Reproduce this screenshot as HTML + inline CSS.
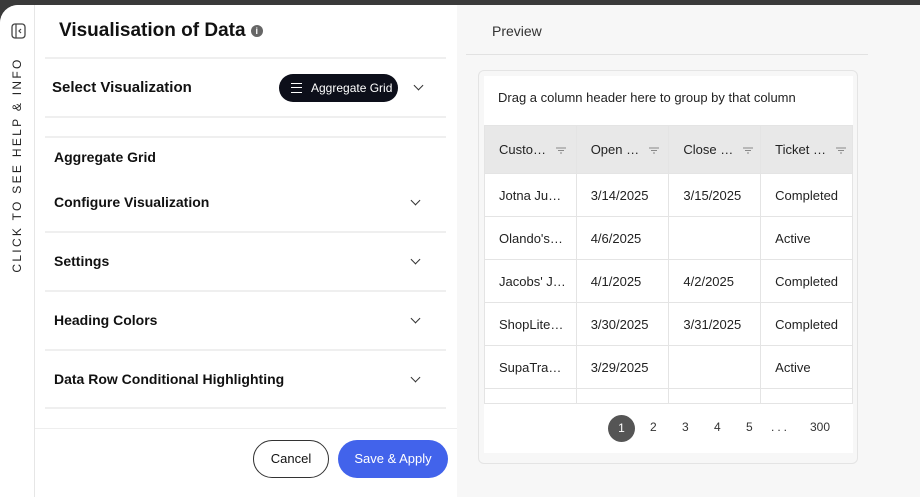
<!DOCTYPE html>
<html><head><style>
*{box-sizing:border-box;margin:0;padding:0}
body{width:920px;height:497px;overflow:hidden;background:#3a3a3a;font-family:"Liberation Sans",sans-serif;position:relative}
.wrap{position:absolute;top:5px;left:0;width:920px;height:492px;background:#fff;border-top-left-radius:18px;overflow:hidden}
.strip{position:absolute;left:0;top:0;width:35px;height:492px;border-right:1px solid #e6e6e6;background:#fff}
.vt{position:absolute;left:17px;top:160px;transform:translate(-50%,-50%) rotate(-90deg);white-space:nowrap;font-size:12px;letter-spacing:2.3px;color:#222}
.left{position:absolute;left:35px;top:0;width:422px;height:492px;background:#fff}
.right{position:absolute;left:457px;top:0;width:463px;height:492px;background:#f7f7f7}
.t{position:absolute;font-weight:bold;color:#111}
.hr{position:absolute;left:10px;width:401px;height:2px;background:#efefef}
.chev{position:absolute;width:7px;height:7px;border-right:1.4px solid #333;border-bottom:1.4px solid #333;transform:rotate(45deg)}
.card{position:absolute;left:21px;top:65px;width:380px;height:394px;border:1px solid #e4e4e4;border-radius:6px;background:#f7f7f7}
.inner{position:absolute;left:5px;top:5px;width:369px;height:377px;background:#fff}
table{position:absolute;left:0;top:49px;border-collapse:collapse;font-size:13px;color:#222}
td,th{border:1px solid #e4e4e4;height:43px;padding-left:14px;text-align:left;font-weight:normal;white-space:nowrap}
th{background:#e8e8e8;height:48px}
.f{display:inline-block;width:10px;vertical-align:middle;margin-left:6px}
.pg{position:absolute;top:344px;font-size:12px;color:#333}
</style></head><body>
<div class="wrap">
<div class="strip">
<svg style="position:absolute;left:11px;top:18px" width="15" height="16" viewBox="0 0 15 16"><rect x="1" y="1" width="13" height="14" rx="3" fill="none" stroke="#444" stroke-width="1.3"/><line x1="5" y1="1" x2="5" y2="15" stroke="#444" stroke-width="1.2"/><path d="M10 6 L8 8 L10 10" fill="none" stroke="#444" stroke-width="1.2"/></svg>
<div class="vt">CLICK TO SEE HELP &amp; INFO</div>
</div>
<div class="left">
<div class="t" style="left:24px;top:15px;font-size:19px">Visualisation of Data <span style="display:inline-block;width:12px;height:12px;border-radius:50%;background:#666;color:#fff;font-size:9px;text-align:center;line-height:12px;vertical-align:2px">i</span></div>
<div class="hr" style="top:52px"></div>
<div class="t" style="left:17px;top:74px;font-size:15px">Select Visualization</div>
<div style="position:absolute;left:244px;top:69px;width:119px;height:28px;border-radius:14px;background:#0d0f1a;color:#fff;font-size:12px;line-height:28px;padding-left:32px">Aggregate Grid
<div style="position:absolute;left:12px;top:9px;width:11px;height:10px;border-top:1.3px solid #fff;border-bottom:1.3px solid #fff"><div style="margin-top:3px;height:1.3px;background:#fff"></div></div></div>
<div class="chev" style="left:380px;top:77px"></div>
<div class="hr" style="top:111px"></div>
<div class="hr" style="top:131px"></div>
<div class="t" style="left:19px;top:144px;font-size:14px">Aggregate Grid</div>
<div class="t" style="left:19px;top:189px;font-size:14px">Configure Visualization</div>
<div class="chev" style="left:377px;top:192px"></div>
<div class="hr" style="top:226px"></div>
<div class="t" style="left:19px;top:248px;font-size:14px">Settings</div>
<div class="chev" style="left:377px;top:251px"></div>
<div class="hr" style="top:285px"></div>
<div class="t" style="left:19px;top:307px;font-size:14px">Heading Colors</div>
<div class="chev" style="left:377px;top:310px"></div>
<div class="hr" style="top:344px"></div>
<div class="t" style="left:19px;top:366px;font-size:14px">Data Row Conditional Highlighting</div>
<div class="chev" style="left:377px;top:369px"></div>
<div class="hr" style="top:402px"></div>
<div style="position:absolute;left:0;top:423px;width:422px;height:1px;background:#eee"></div>
<div style="position:absolute;left:218px;top:435px;width:76px;height:38px;border:1px solid #333;border-radius:19px;text-align:center;line-height:36px;font-size:13px;color:#111">Cancel</div>
<div style="position:absolute;left:303px;top:435px;width:110px;height:38px;border-radius:19px;background:#4263eb;color:#fff;text-align:center;line-height:38px;font-size:13px">Save &amp; Apply</div>
</div>
<div class="right">
<div style="position:absolute;left:35px;top:18px;font-size:14px;color:#333">Preview</div>
<div style="position:absolute;left:9px;top:49px;width:402px;height:1px;background:#e2e2e2"></div>
<div class="card"><div class="inner">
<div style="position:absolute;left:14px;top:14px;font-size:13px;color:#222">Drag a column header here to group by that column</div>
<table>
<colgroup><col style="width:92px"><col style="width:93px"><col style="width:92px"><col style="width:92px"></colgroup>
<tr><th>Custo… <svg class="f" viewBox="0 0 10 7"><path d="M0 1h10M2 3.5h6M4 6h2" stroke="#888" stroke-width="1"/></svg></th><th>Open … <svg class="f" viewBox="0 0 10 7"><path d="M0 1h10M2 3.5h6M4 6h2" stroke="#888" stroke-width="1"/></svg></th><th>Close … <svg class="f" viewBox="0 0 10 7"><path d="M0 1h10M2 3.5h6M4 6h2" stroke="#888" stroke-width="1"/></svg></th><th>Ticket … <svg class="f" viewBox="0 0 10 7"><path d="M0 1h10M2 3.5h6M4 6h2" stroke="#888" stroke-width="1"/></svg></th></tr>
<tr><td>Jotna Ju…</td><td>3/14/2025</td><td>3/15/2025</td><td>Completed</td></tr>
<tr><td>Olando's…</td><td>4/6/2025</td><td></td><td>Active</td></tr>
<tr><td>Jacobs' J…</td><td>4/1/2025</td><td>4/2/2025</td><td>Completed</td></tr>
<tr><td>ShopLite…</td><td>3/30/2025</td><td>3/31/2025</td><td>Completed</td></tr>
<tr><td>SupaTra…</td><td>3/29/2025</td><td></td><td>Active</td></tr>
<tr><td style="height:15px"></td><td style="height:15px"></td><td style="height:15px"></td><td style="height:15px"></td></tr>
</table>
<div style="position:absolute;left:124px;top:339px;width:27px;height:27px;border-radius:50%;background:#555;color:#fff;font-size:12px;text-align:center;line-height:27px">1</div>
<div class="pg" style="left:166px">2</div>
<div class="pg" style="left:198px">3</div>
<div class="pg" style="left:230px">4</div>
<div class="pg" style="left:262px">5</div>
<div class="pg" style="left:287px;letter-spacing:3px">...</div>
<div class="pg" style="left:326px">300</div>
</div></div>
</div>
</div>
</body></html>
